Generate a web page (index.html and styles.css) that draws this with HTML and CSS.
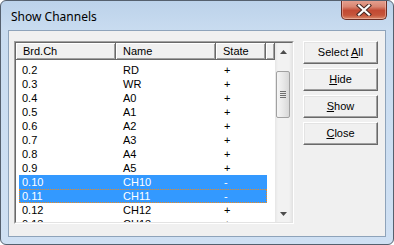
FILE: index.html
```html
<!DOCTYPE html>
<html>
<head>
<meta charset="utf-8">
<link rel="stylesheet" href="styles.css">
</head>
<body>
<div class="window">
  <div class="titlebar">
    <span class="title">Show Channels</span>
    <div class="close-btn">
      <svg width="16" height="12" viewBox="0 0 16 12">
        <path d="M3 1.5 L13 10.5 M13 1.5 L3 10.5" stroke="#4a2a25" stroke-width="4.2" stroke-linecap="square"/>
        <path d="M3 1.5 L13 10.5 M13 1.5 L3 10.5" stroke="#ffffff" stroke-width="2.2" stroke-linecap="square"/>
      </svg>
    </div>
  </div>
  <div class="client">
    <div class="listbox">
      <div class="listinner">
        <div class="lv">
          <div class="header">
            <div class="hcell w1">Brd.Ch</div>
            <div class="hcell w2">Name</div>
            <div class="hcell w3">State</div>
            <div class="hcell w4"></div>
          </div>
          <div class="rows">
            <div class="row"><span class="c1">0.2</span><span class="c2">RD</span><span class="c3">+</span></div>
            <div class="row"><span class="c1">0.3</span><span class="c2">WR</span><span class="c3">+</span></div>
            <div class="row"><span class="c1">0.4</span><span class="c2">A0</span><span class="c3">+</span></div>
            <div class="row"><span class="c1">0.5</span><span class="c2">A1</span><span class="c3">+</span></div>
            <div class="row"><span class="c1">0.6</span><span class="c2">A2</span><span class="c3">+</span></div>
            <div class="row"><span class="c1">0.7</span><span class="c2">A3</span><span class="c3">+</span></div>
            <div class="row"><span class="c1">0.8</span><span class="c2">A4</span><span class="c3">+</span></div>
            <div class="row"><span class="c1">0.9</span><span class="c2">A5</span><span class="c3">+</span></div>
            <div class="row sel"><span class="c1">0.10</span><span class="c2">CH10</span><span class="c3">-</span></div>
            <div class="row sel focus"><span class="c1">0.11</span><span class="c2">CH11</span><span class="c3">-</span></div>
            <div class="row"><span class="c1">0.12</span><span class="c2">CH12</span><span class="c3">+</span></div>
            <div class="row"><span class="c1">0.13</span><span class="c2">CH13</span><span class="c3">+</span></div>
          </div>
        </div>
        <div class="vscroll">
          <div class="arrow">
            <svg width="7" height="4" viewBox="0 0 7 4"><path d="M3.5 0 L7 4 L0 4 Z" fill="#4d4d4d"/></svg>
          </div>
          <div class="track">
            <div class="thumb">
              <span class="grip"></span><span class="grip"></span><span class="grip"></span><span class="grip"></span>
            </div>
          </div>
          <div class="arrow down">
            <svg width="7" height="4" viewBox="0 0 7 4"><path d="M0 0 L7 0 L3.5 4 Z" fill="#4d4d4d"/></svg>
          </div>
        </div>
      </div>
    </div>
    <div class="buttons">
      <div class="btn">Select <u>A</u>ll</div>
      <div class="btn"><u>H</u>ide</div>
      <div class="btn"><u>S</u>how</div>
      <div class="btn"><u>C</u>lose</div>
    </div>
  </div>
</div>
</body>
</html>
```

FILE: styles.css
```css
html, body {
  margin: 0;
  padding: 0;
  background: #ffffff;
}

.window {
  width: 394px;
  height: 245px;
  box-sizing: border-box;
  border: 1px solid #55606e;
  border-radius: 6px;
  background: linear-gradient(to bottom, #bcd2ea 0px, #c9dcf0 30px, #cfe0f3 100%);
  display: flex;
  flex-direction: column;
  overflow: hidden;
  font-family: "Liberation Sans", Arial, sans-serif;
}

.titlebar {
  height: 29px;
  display: flex;
  justify-content: space-between;
  align-items: flex-start;
  flex: none;
}

.title {
  margin: 9px 0 0 10px;
  font-family: "Noto Sans", "Open Sans", sans-serif;
  font-size: 12px;
  line-height: 14px;
  color: #000000;
}

.close-btn {
  width: 46px;
  height: 20px;
  margin: -1px 6px 0 0;
  box-sizing: border-box;
  border: 1px solid #6a2d24;
  border-top: none;
  border-radius: 0 0 5px 5px;
  background: linear-gradient(to bottom, #e7a393 0%, #d98672 35%, #c24a33 55%, #c6553b 80%, #d98a6c 100%);
  box-shadow: inset 0 0 0 1px rgba(255, 210, 200, 0.45);
  display: flex;
  align-items: center;
  justify-content: center;
}

.client {
  flex: 1;
  margin: 0 7px 7px 7px;
  border: 1px solid #8ea3ba;
  background: #f0f0f0;
  display: flex;
  align-items: flex-start;
  padding: 10px 0 0 5px;
  gap: 9px;
}

.listbox {
  width: 280px;
  height: 183px;
  box-sizing: border-box;
  border: 1px solid;
  border-color: #a0a0a0 #ffffff #ffffff #a0a0a0;
}

.listinner {
  height: 100%;
  box-sizing: border-box;
  border: 1px solid;
  border-color: #696969 #e3e3e3 #e3e3e3 #696969;
  background: #ffffff;
  display: flex;
}

.lv {
  flex: 1;
  overflow: hidden;
  font-size: 11px;
  color: #000000;
}

.header {
  display: flex;
  height: 17px;
}

.hcell {
  box-sizing: border-box;
  height: 17px;
  background: #f0f0f0;
  border-right: 1px solid #696969;
  border-bottom: 1px solid #696969;
  box-shadow: inset 1px 1px #ffffff, inset -1px -1px #a0a0a0;
  line-height: 16px;
  padding-left: 7px;
  white-space: nowrap;
}

.w1 { width: 100px; }
.w2 { width: 100px; }
.w3 { width: 50px; }
.w4 { width: 9px; }

.rows {
  padding-top: 3px;
}

.row {
  display: flex;
  height: 14px;
  line-height: 14px;
  margin-left: 3px;
  width: 248px;
  box-sizing: border-box;
}

.row span {
  display: block;
  white-space: nowrap;
}

.c1 { width: 97px; padding-left: 3px; box-sizing: border-box; }
.c2 { width: 100px; padding-left: 7px; box-sizing: border-box; }
.c3 { width: 51px; padding-left: 8px; box-sizing: border-box; }

.row.sel {
  background: #3399ff;
  color: #ffffff;
}

.row.focus {
  outline: 1px dotted #f08a1c;
  outline-offset: -1px;
}

.vscroll {
  width: 17px;
  display: flex;
  flex-direction: column;
  background: linear-gradient(to right, #e6e6e6 0px, #f2f2f2 3px, #f2f2f2 14px, #e6e6e6 17px);
}

.arrow {
  height: 17px;
  display: flex;
  align-items: center;
  justify-content: center;
  flex: none;
}

.track {
  flex: 1;
  padding-top: 11px;
}

.thumb {
  width: 14px;
  height: 47px;
  margin-left: 1px;
  box-sizing: border-box;
  border: 1px solid #a1a1a1;
  border-radius: 2px;
  background: linear-gradient(to right, #f5f5f5, #e8e8e8 50%, #d8d8d8);
  display: flex;
  flex-direction: column;
  align-items: center;
  justify-content: center;
  gap: 1px;
}

.grip {
  display: block;
  width: 6px;
  height: 1px;
  background: #6f6f6f;
}

.buttons {
  display: flex;
  flex-direction: column;
  gap: 4px;
}

.btn {
  width: 75px;
  height: 23px;
  box-sizing: border-box;
  border: 1px solid;
  border-color: #ffffff #696969 #696969 #ffffff;
  box-shadow: inset -1px -1px #a0a0a0, inset 1px 1px #e3e3e3;
  background: #f0f0f0;
  font-size: 11px;
  line-height: 21px;
  text-align: center;
  color: #000000;
}

.btn u {
  text-decoration: underline;
  text-underline-offset: 1px;
}
```
